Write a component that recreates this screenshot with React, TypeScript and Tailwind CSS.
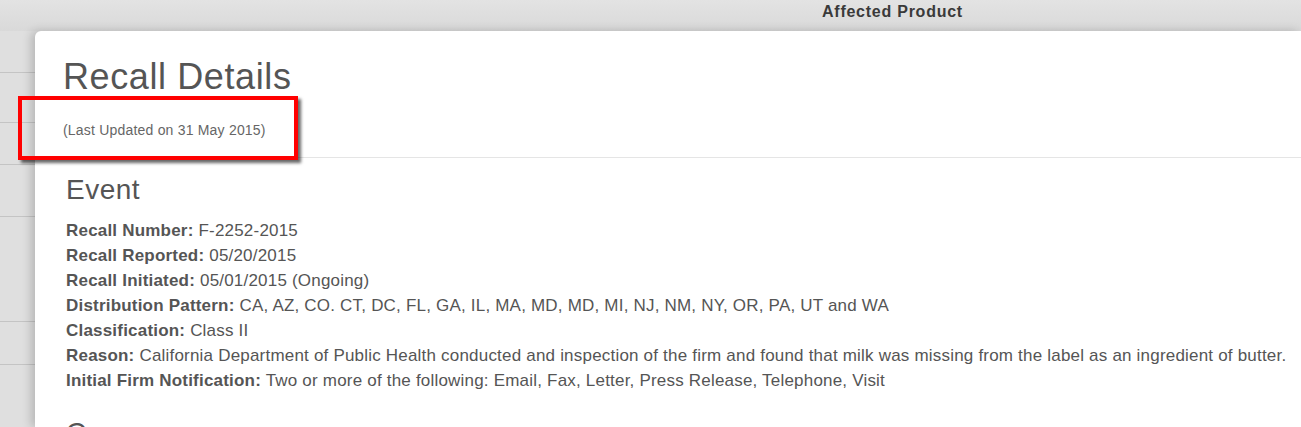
import React from "react"

const rows = [
  { label: "Recall Number:", value: "F-2252-2015" },
  { label: "Recall Reported:", value: "05/20/2015" },
  { label: "Recall Initiated:", value: "05/01/2015 (Ongoing)" },
  {
    label: "Distribution Pattern:",
    value: "CA, AZ, CO. CT, DC, FL, GA, IL, MA, MD, MD, MI, NJ, NM, NY, OR, PA, UT and WA",
  },
  { label: "Classification:", value: "Class II" },
  {
    label: "Reason:",
    value:
      "California Department of Public Health conducted and inspection of the firm and found that milk was missing from the label as an ingredient of butter.",
  },
  {
    label: "Initial Firm Notification:",
    value: "Two or more of the following: Email, Fax, Letter, Press Release, Telephone, Visit",
  },
]

export default function App() {
  return (
    <div
      className="relative w-[1301px] h-[427px] overflow-hidden bg-[#dfdfdf] text-[#555]"
      style={{ fontFamily: '"Liberation Sans", Arial, sans-serif' }}
    >
      {/* table header behind the overlay */}
      <div className="h-[31px] bg-gradient-to-b from-[#e3e3e3] to-[#d9d9d9] flex">
        <div className="w-[822px]" />
        <div className="pt-[2px] text-[16px] leading-[20px] tracking-[0.75px] font-bold text-[#3a3a3a]">
          Affected Product
        </div>
      </div>

      <div className="flex h-[396px]">
        {/* table rows under the modal */}
        <div className="w-[35px] shrink-0 flex flex-col">
          <div className="h-[42px] border-b border-[#c4c4c4]" />
          <div className="h-[50px] border-b border-[#c4c4c4]" />
          <div className="h-[42px] border-b border-[#c4c4c4]" />
          <div className="h-[52px] border-b border-[#c4c4c4]" />
          <div className="h-[105px] border-b border-[#c4c4c4]" />
          <div className="h-[43px] border-b border-[#c4c4c4]" />
          <div className="flex-1" />
        </div>

        {/* modal */}
        <div className="flex-1 bg-white rounded-tl-[6px] shadow-[-4px_0_10px_rgba(0,0,0,0.18)]">
          <div className="pl-[28px] pt-[26px] pb-[17px] border-b border-[#e5e5e5]">
            <h1 className="text-[36px] leading-[40px] tracking-[0.6px] text-[#555]">Recall Details</h1>
            <p className="mt-[23px] text-[14px] leading-[20px] tracking-[0.2px] text-[#666]">
              (Last Updated on 31 May 2015)
            </p>
          </div>

          <div className="pl-[31px] pt-[14px]">
            <h2 className="text-[28px] leading-[36px] tracking-[0.5px] text-[#555]">Event</h2>
            <div className="mt-[10px] text-[17px] leading-[25px] tracking-[0.2px] text-[#555]">
              {rows.map((r) => (
                <div key={r.label} className="whitespace-nowrap">
                  <span className="font-bold">{r.label}</span> {r.value}
                </div>
              ))}
            </div>
            <h2 className="mt-[22px] text-[28px] leading-[36px] tracking-[0.5px] text-[#555]">Company</h2>
          </div>
        </div>
      </div>

      {/* red annotation box */}
      <div className="absolute left-[18px] top-[96px] w-[280px] h-[64px] border-4 border-[#ff0000] shadow-[3px_3px_3px_rgba(0,0,0,0.6)]" />
    </div>
  )
}
